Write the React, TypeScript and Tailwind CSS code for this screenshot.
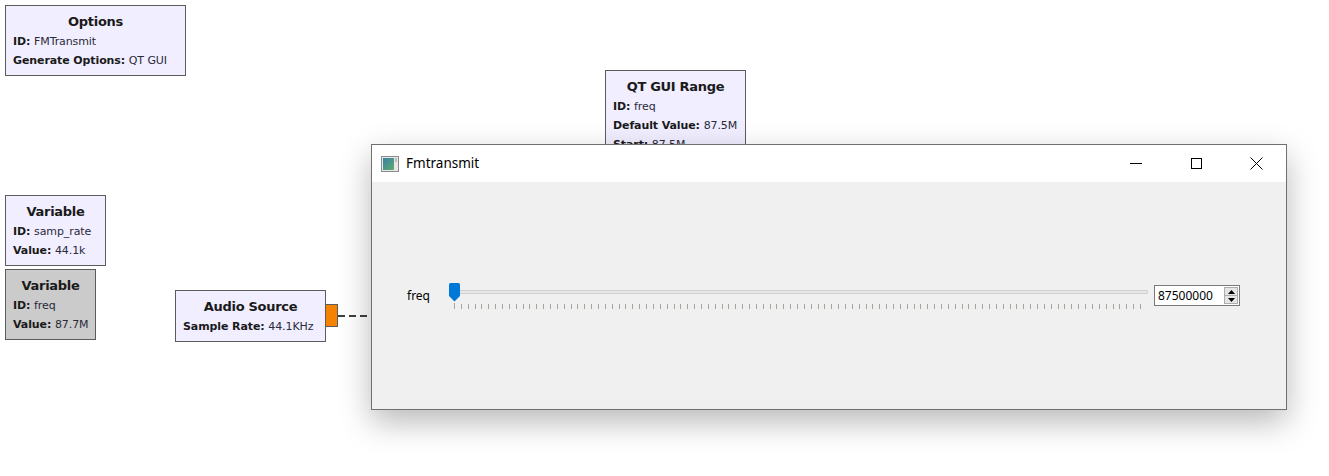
import React from "react";

type Param = { label: string; value: string };

function Block({
  title,
  params,
  className,
  shaded,
}: {
  title: string;
  params: Param[];
  className: string;
  shaded?: boolean;
}) {
  return (
    <div
      className={`absolute border border-[#5c5c5c] px-[7px] pt-[6px] pb-[5px] font-['DejaVu_Sans',sans-serif] text-[#1a1a1a] ${
        shaded ? "bg-[#cbcbcb]" : "bg-[#f0eeff]"
      } ${className}`}
    >
      <div className="text-center text-[13px] font-bold leading-[20px] tracking-[-0.3px]">{title}</div>
      {params.map((p) => (
        <div key={p.label} className="whitespace-nowrap text-[11px] leading-[19px] tracking-[-0.1px]">
          <span className="font-bold">{p.label}: </span>
          <span className="text-[#2a2a3a]">{p.value}</span>
        </div>
      ))}
    </div>
  );
}

function WindowIcon() {
  return (
    <svg width="18" height="16" viewBox="0 0 18 16">
      <defs>
        <linearGradient id="wi" x1="0" y1="0" x2="1" y2="1">
          <stop offset="0" stopColor="#3a7fa8" />
          <stop offset="1" stopColor="#5fae6a" />
        </linearGradient>
      </defs>
      <rect x="0.5" y="0.5" width="17" height="15" fill="#e8e8e8" stroke="#8a8a8a" />
      <rect x="2" y="2" width="11" height="12" fill="url(#wi)" />
      <rect x="14" y="2" width="2" height="4" fill="#bcbcbc" />
    </svg>
  );
}

function Slider() {
  const ticks = Array.from({ length: 101 }, (_, i) => i);
  return (
    <div className="flex flex-1 flex-col">
      <div className="relative h-[19px]">
        <div className="absolute left-[4px] right-0 top-[7px] h-[4px] rounded-[1px] border border-[#d0d0d0] bg-[#e7e7e7]" />
        <svg className="absolute left-0 top-0" width="11" height="19" viewBox="0 0 11 19">
          <path d="M1.5 0 H9.5 Q11 0 11 1.5 V13 L5.5 18.5 L0 13 V1.5 Q0 0 1.5 0 Z" fill="#0078d7" />
        </svg>
      </div>
      <div className="mt-[1px] flex justify-between pl-[5px] pr-[6px]">
        {ticks.map((i) => (
          <div key={i} className={`w-px bg-[#a8a39b] ${i === 0 ? "h-[6px]" : "h-[5px] mt-[1px]"}`} />
        ))}
      </div>
    </div>
  );
}

function SpinBox() {
  return (
    <div className="ml-[6px] flex h-[21px] w-[86px] items-center border border-[#7a7a7a] bg-white pl-[3px] pr-[1px]">
      <span className="flex-1 font-['Noto_Sans',sans-serif] text-[12px] leading-none text-black">87500000</span>
      <div className="flex h-[17px] w-[14px] flex-col border border-[#adadad] bg-[#e5e5e5]">
        <div className="flex flex-1 items-center justify-center border-b border-[#adadad]">
          <svg width="7" height="4" viewBox="0 0 7 4">
            <path d="M0 4 L3.5 0 L7 4 Z" fill="#000" />
          </svg>
        </div>
        <div className="flex flex-1 items-center justify-center">
          <svg width="7" height="4" viewBox="0 0 7 4">
            <path d="M0 0 L3.5 4 L7 0 Z" fill="#000" />
          </svg>
        </div>
      </div>
    </div>
  );
}

function QtWindow() {
  return (
    <div className="absolute left-[371px] top-[144px] flex h-[266px] w-[916px] flex-col border border-[#707070] bg-[#f0f0f0] shadow-[0_12px_30px_rgba(0,0,0,0.28)]">
      <div className="flex h-[37px] items-center bg-white">
        <div className="ml-[9px] flex items-center">
          <WindowIcon />
        </div>
        <span className="ml-[7px] font-['Noto_Sans',sans-serif] text-[13.5px] text-black">Fmtransmit</span>
        <div className="ml-auto flex h-full">
          <div className="flex w-[60px] items-center justify-center">
            <div className="h-px w-[12px] bg-black" />
          </div>
          <div className="flex w-[60px] items-center justify-center">
            <div className="h-[11px] w-[11px] border border-black" />
          </div>
          <div className="flex w-[60px] items-center justify-center">
            <svg width="13" height="13" viewBox="0 0 13 13">
              <path d="M0.5 0.5 L12.5 12.5 M12.5 0.5 L0.5 12.5" stroke="#000" strokeWidth="1" />
            </svg>
          </div>
        </div>
      </div>
      <div className="flex flex-1 items-center pl-[35px] pr-[46px]">
        <div className="flex flex-1 items-center">
          <span className="w-[42px] font-['Noto_Sans',sans-serif] text-[12px] text-black">freq</span>
          <Slider />
          <SpinBox />
        </div>
      </div>
    </div>
  );
}

export default function App() {
  return (
    <div className="relative h-[476px] w-[1329px] overflow-hidden bg-white">
      <Block
        title="Options"
        className="left-[5px] top-[5px] w-[181px]"
        params={[
          { label: "ID", value: "FMTransmit" },
          { label: "Generate Options", value: "QT GUI" },
        ]}
      />
      <Block
        title="Variable"
        className="left-[5px] top-[195px] w-[101px]"
        params={[
          { label: "ID", value: "samp_rate" },
          { label: "Value", value: "44.1k" },
        ]}
      />
      <Block
        title="Variable"
        shaded
        className="left-[5px] top-[269px] w-[91px]"
        params={[
          { label: "ID", value: "freq" },
          { label: "Value", value: "87.7M" },
        ]}
      />
      <Block
        title="Audio Source"
        className="left-[175px] top-[290px] w-[151px]"
        params={[{ label: "Sample Rate", value: "44.1KHz" }]}
      />
      {/* output port + dashed connection */}
      <div className="absolute left-[325px] top-[304px] h-[23px] w-[13px] border border-[#5c5c5c] bg-[#f58200]" />
      <svg className="absolute left-[338px] top-[312px]" width="40" height="8">
        <line x1="0" y1="4" x2="40" y2="4" stroke="#000" strokeWidth="1.3" strokeDasharray="7 4" />
      </svg>
      <Block
        title="QT GUI Range"
        className="left-[605px] top-[70px] w-[141px]"
        params={[
          { label: "ID", value: "freq" },
          { label: "Default Value", value: "87.5M" },
          { label: "Start", value: "87.5M" },
          { label: "Stop", value: "108M" },
        ]}
      />
      <QtWindow />
    </div>
  );
}
